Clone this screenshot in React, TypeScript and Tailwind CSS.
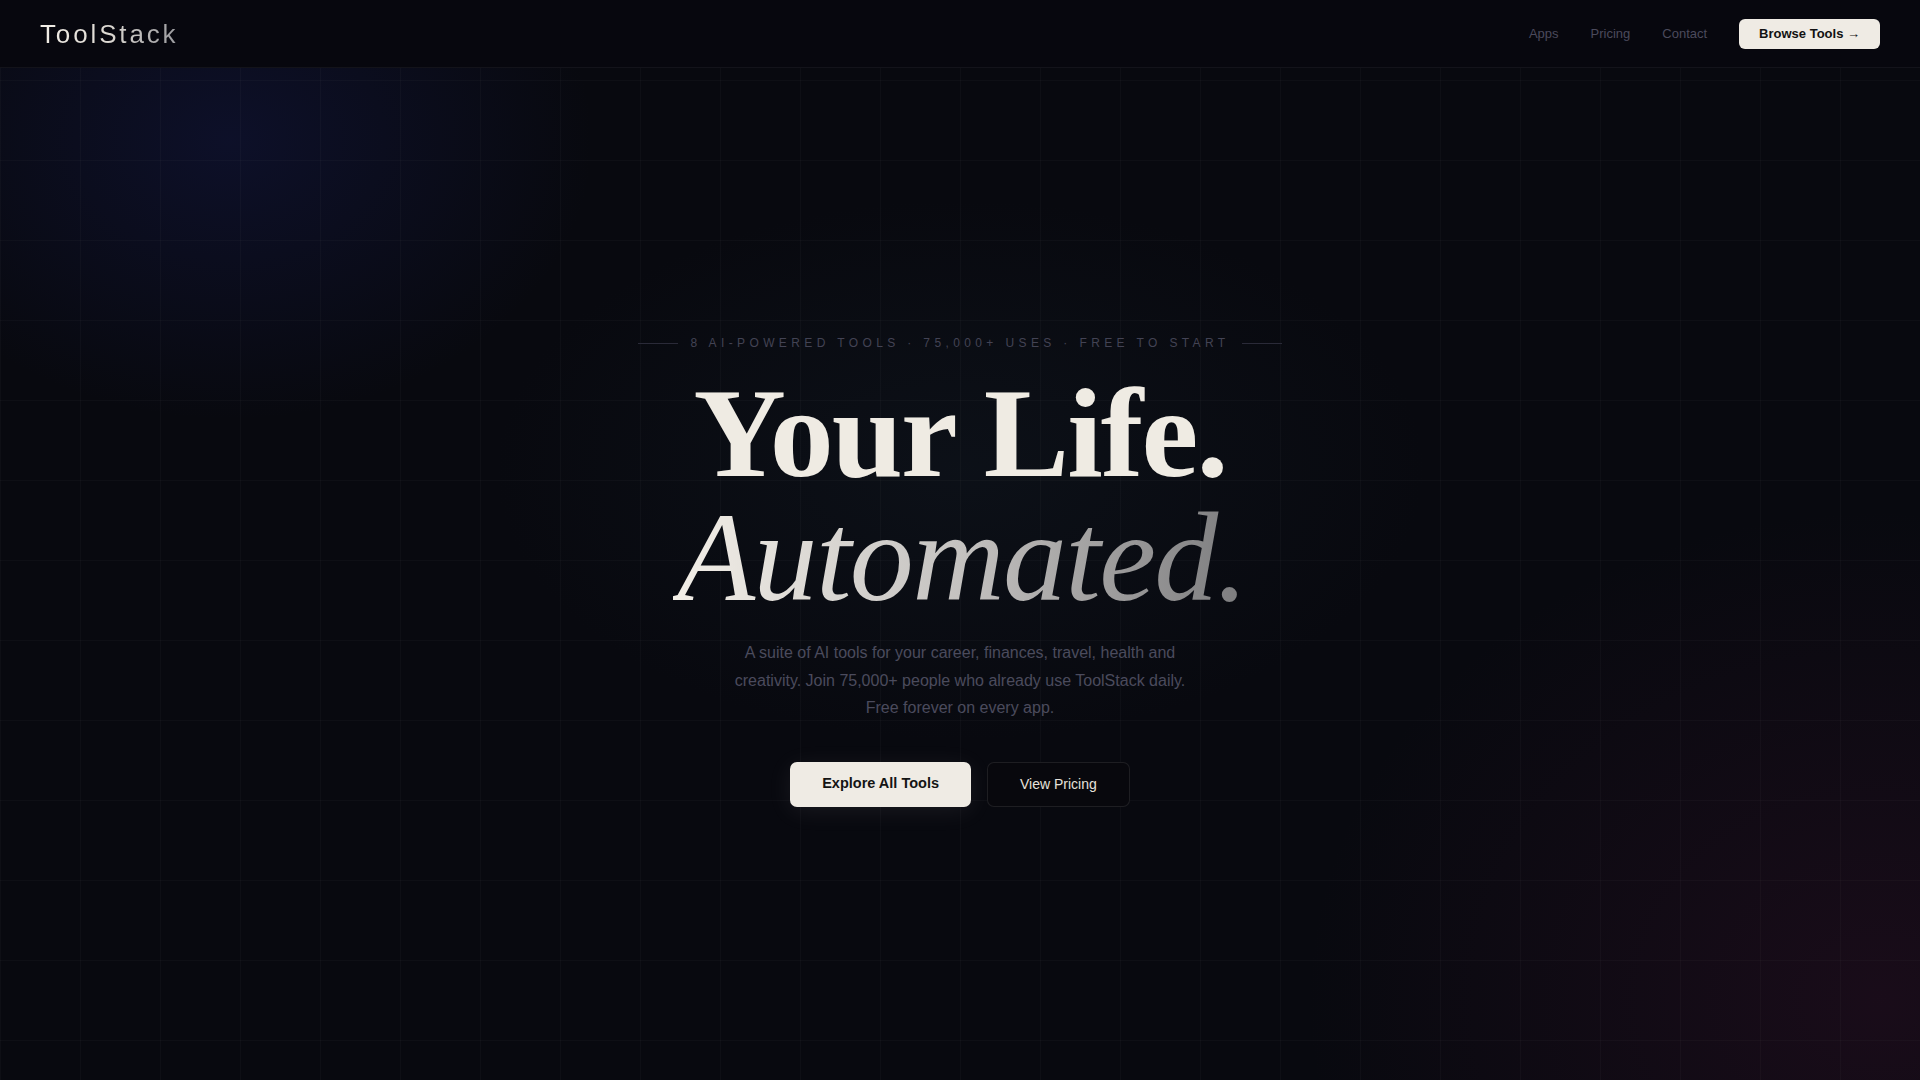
import React from 'react';

const navLinks = ['Apps', 'Pricing', 'Contact'];

function Header() {
  return (
    <header className="relative z-10 flex h-[68px] shrink-0 items-center justify-between border-b border-white/[0.05] bg-[#07070e] px-10">
      <a
        href="#"
        className="bg-gradient-to-r from-[#f2eee7] via-[#dcd8d2] to-[#9a9a9e] bg-clip-text text-[26px] leading-none tracking-[0.11em] text-transparent"
      >
        ToolStack
      </a>
      <nav className="flex items-center gap-8">
        {navLinks.map((link) => (
          <a key={link} href="#" className="text-[13px] text-[#4b4a5c] hover:text-[#8a8998]">
            {link}
          </a>
        ))}
        <button className="flex h-[30px] items-center rounded-[6px] bg-[#efebe4] px-5 text-[13px] font-bold text-[#121212]">
          Browse Tools →
        </button>
      </nav>
    </header>
  );
}

function Hero() {
  return (
    <main className="relative z-10 flex flex-1 flex-col items-center justify-center pb-[6px]">
      <div className="flex items-center gap-3">
        <span className="h-px w-10 bg-[#2a2a38]" />
        <p className="text-[12px] leading-4 uppercase tracking-[0.365em] text-[#434354]">
          8 AI-Powered Tools · 75,000+ Uses · Free to Start
        </p>
        <span className="h-px w-10 bg-[#2a2a38]" />
      </div>

      <h1 className="mt-5 text-center font-['Liberation_Serif','Times_New_Roman',serif] text-[128px] leading-[124px]">
        <span className="block font-bold tracking-[-0.015em] text-[#efebe3]">Your Life.</span>
        <span className="block bg-gradient-to-r from-[#f3efe8] via-[#c4c2c0] to-[#7c7c7e] bg-clip-text pl-1 italic tracking-[-0.013em] text-transparent">
          Automated.
        </span>
      </h1>

      <p className="mt-5 max-w-[460px] text-center text-[16px] leading-[27.5px] text-[#4b4b5d]">
        A suite of AI tools for your career, finances, travel, health and creativity. Join 75,000+
        people who already use ToolStack daily. Free forever on every app.
      </p>

      <div className="mt-10 flex items-center gap-4">
        <button className="h-[45px] rounded-[7px] bg-[#efebe4] px-8 text-[14.5px] font-bold text-[#141414] shadow-[0_4px_24px_rgba(239,235,228,0.08)]">
          Explore All Tools
        </button>
        <button className="h-[45px] rounded-[7px] border border-white/[0.09] bg-[#08080d] px-8 text-[14px] text-[#e6e2db]">
          View Pricing
        </button>
      </div>
    </main>
  );
}

export default function App() {
  return (
    <div className="relative flex h-screen flex-col overflow-hidden bg-[#08090f] font-['Liberation_Sans',Arial,sans-serif]">
      {/* glows + grid */}
      <div className="pointer-events-none absolute inset-0 bg-[radial-gradient(ellipse_520px_400px_at_230px_140px,rgba(28,36,115,0.26),transparent_70%)]" />
      <div className="pointer-events-none absolute inset-0 bg-[radial-gradient(ellipse_820px_700px_at_1880px_1000px,rgba(80,22,58,0.24),transparent_70%)]" />
      <div className="pointer-events-none absolute inset-0 bg-[radial-gradient(ellipse_620px_360px_at_960px_470px,rgba(20,30,40,0.35),transparent_75%)]" />
      <div className="pointer-events-none absolute inset-0 bg-[linear-gradient(rgba(255,255,255,0.022)_1px,transparent_1px),linear-gradient(90deg,rgba(255,255,255,0.022)_1px,transparent_1px)] bg-[size:80px_80px]" />

      <Header />
      <Hero />
    </div>
  );
}
